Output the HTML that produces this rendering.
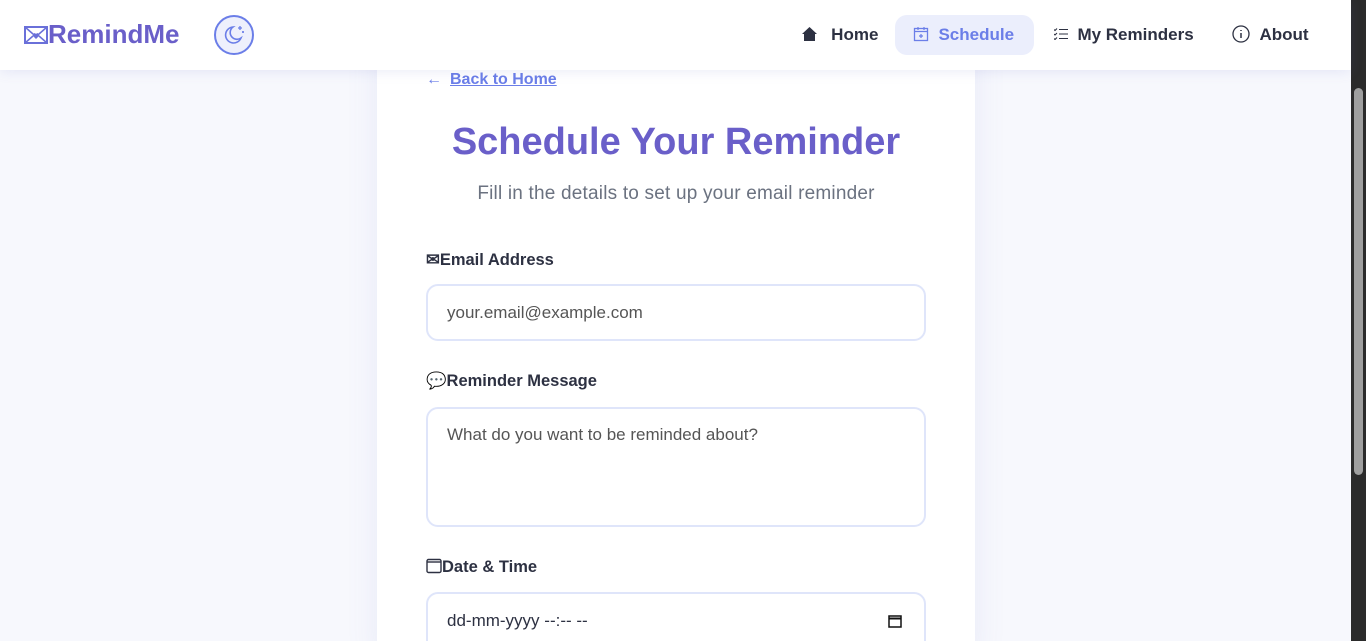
<!DOCTYPE html>
<html><head><meta charset="utf-8"><style>
*{box-sizing:border-box;margin:0;padding:0}
html,body{width:1366px;height:641px;overflow:hidden}
body{background:#f7f8fd;font-family:"Liberation Sans",sans-serif;color:#2d3142;position:relative}
.hdr{position:absolute;left:0;top:0;width:1351px;height:70px;background:#fff;box-shadow:0 2px 12px rgba(100,110,200,.12);z-index:2}
.logo{position:absolute;left:24px;top:19px;font-size:26px;font-weight:bold;color:#6a5fc9;letter-spacing:0}
.moon{position:absolute;left:214px;top:15px;width:40px;height:40px;border:2px solid #6b7ee8;border-radius:50%;background:#eef0fc}
.nav a{position:absolute;top:15px;height:40px;line-height:40px;font-size:17px;font-weight:bold;color:#2d3142;text-decoration:none}
.card{position:absolute;left:377px;top:40px;width:598px;height:620px;background:#fff;box-shadow:0 0 30px rgba(100,110,200,.1)}
.back{position:absolute;left:426px;top:71px;font-size:16px;font-weight:bold;color:#6b7ee8}
.back u{margin-left:8px}
h1{position:absolute;left:377px;width:598px;top:121px;text-align:center;font-size:38px;color:#6a5fc9;letter-spacing:0}
.sub{position:absolute;left:377px;width:598px;top:183px;text-align:center;font-size:19px;color:#6b7280;letter-spacing:.2px}
.lbl{position:absolute;left:426px;font-size:16.5px;font-weight:bold;color:#2d3142}
.inp{position:absolute;left:426px;width:500px;border:2px solid #dfe5fa;border-radius:12px;background:#fff;font-size:17px;color:#555;padding-left:19px}
.sb{position:absolute;left:1351px;top:0;width:15px;height:641px;background:#2b2b2b}
.th{position:absolute;left:1354px;top:88px;width:9px;height:387px;background:#9f9f9f;border-radius:5px}
</style></head><body>
<div class="card"></div>
<div class="hdr">
<div class="logo"><svg width="24" height="18" viewBox="0 0 24 18" style="vertical-align:-1px"><rect x="1" y="1" width="22" height="16" fill="none" stroke="#6a70d9" stroke-width="2"/><path d="M1 1l8 7M23 1l-8 7M1 17l8-7M23 17l-8-7" stroke="#6a70d9" stroke-width="1.5"/><path d="M12 13l-3-3a1.7 1.7 0 013-2 1.7 1.7 0 013 2z" fill="#6a70d9"/></svg>RemindMe</div>
<div class="moon"><svg width="36" height="36" viewBox="0 0 36 36"><path d="M17 10a8 8 0 1 0 8 11a6.5 6.5 0 0 1-8-11z" fill="none" stroke="#6b7ee8" stroke-width="1.6"/><path d="M24 9v4M22 11h4M27 14v2M26 15h2" stroke="#6b7ee8" stroke-width="1.3"/></svg></div>
<div class="nav">
<a style="left:802px"><svg width="15" height="14" viewBox="0 0 15 14" style="vertical-align:-1px"><path d="M7.5 0L0 7h2v7h11V7h2z" fill="#2d3142"/></svg>&nbsp;&nbsp; Home</a>
<a style="left:895px;width:139px;background:#ebeefc;border-radius:12px;color:#6b7ee8;padding-left:18px"><svg width="16" height="16" viewBox="0 0 16 16" style="vertical-align:-2px"><rect x="1.5" y="2.5" width="13" height="12" fill="none" stroke="#6b7ee8" stroke-width="1.3"/><path d="M1.5 5.5h13M5 1v3M11 1v3M8 8v4M6 10h4" stroke="#6b7ee8" stroke-width="1.2"/></svg>&nbsp; Schedule</a>
<a style="left:1054px"><svg width="14" height="12" viewBox="0 0 14 12" style="vertical-align:0"><path d="M5 1.5h9M5 6h9M5 10.5h9M0 1.5l1 1 2-2M0 6l1 1 2-2M0 10.5l1 1 2-2" stroke="#2d3142" stroke-width="1.1" fill="none"/></svg>&nbsp;&nbsp;My Reminders</a>
<a style="left:1232px"><svg width="18" height="18" viewBox="0 0 18 18" style="vertical-align:-3px"><circle cx="9" cy="9" r="8" fill="none" stroke="#2d3142" stroke-width="1.3"/><path d="M9 8v5M9 5v1" stroke="#2d3142" stroke-width="1.5"/></svg>&nbsp;&nbsp;About</a>
</div>
</div>
<div class="back">&larr;<u>Back to Home</u></div>
<h1>Schedule Your Reminder</h1>
<div class="sub">Fill in the details to set up your email reminder</div>
<div class="lbl" style="top:250px">&#9993;Email Address</div>
<div class="inp" style="top:284px;height:57px;line-height:53px">your.email@example.com</div>
<div class="lbl" style="top:372px">&#128172;Reminder Message</div>
<div class="inp" style="top:407px;height:120px;padding-top:16px">What do you want to be reminded about?</div>
<div class="lbl" style="top:558px"><svg width="16" height="16" viewBox="0 0 16 16" style="vertical-align:-2px"><rect x="1" y="1.5" width="14" height="13" rx="1.5" fill="none" stroke="#2d3142" stroke-width="1.4"/><path d="M1 4h14" stroke="#2d3142" stroke-width="1.4"/></svg>Date &amp; Time</div>
<div class="inp" style="top:592px;height:70px;line-height:54px;color:#2d3142">dd-mm-yyyy --:-- --<svg width="14" height="14" viewBox="0 0 14 14" style="position:absolute;right:22px;top:20px"><rect x="1" y="2" width="12" height="11" fill="none" stroke="#111" stroke-width="1.5"/><path d="M1 4.5h12" stroke="#111" stroke-width="2"/></svg></div>
<div class="sb"></div><div class="th"></div>
</body></html>
